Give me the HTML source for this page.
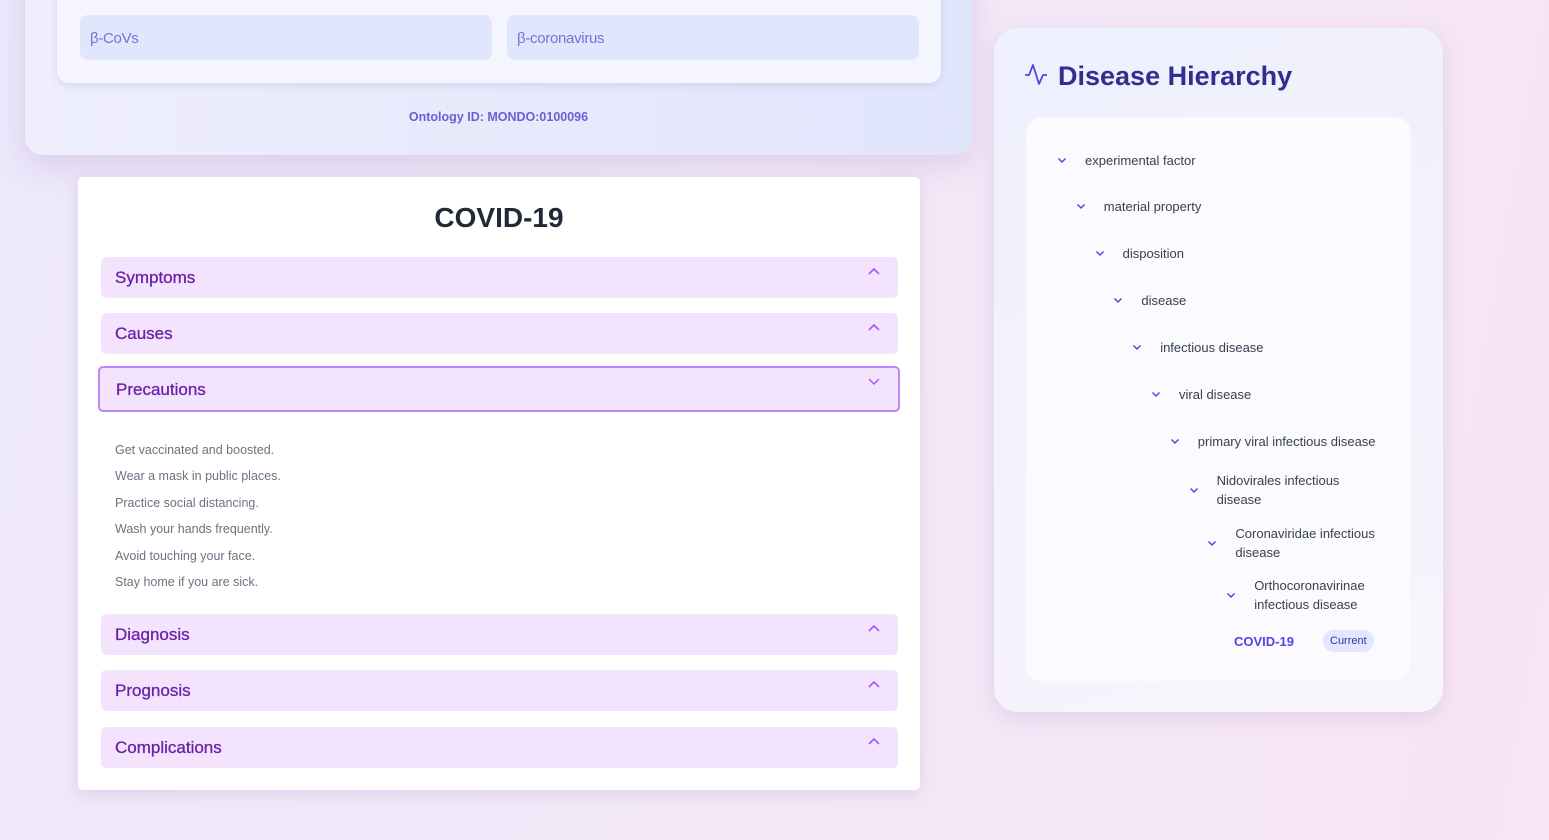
<!DOCTYPE html>
<html><head><meta charset="utf-8"><style>
*{box-sizing:border-box;margin:0;padding:0}
body{width:1549px;height:840px;overflow:hidden;font-family:"Liberation Sans",sans-serif;background:linear-gradient(100deg,#ede8fb 0%,#f2e8f8 50%,#f7e4f4 100%);position:relative}
.top{position:absolute;left:25px;top:-30px;width:947px;height:185px;border-radius:18px;background:linear-gradient(90deg,#eeeefd,#e1e5fc);box-shadow:0 10px 30px rgba(120,90,160,.18)}
.inner{position:absolute;left:32px;top:0;width:884px;height:113px;background:#f4f5fe;border-radius:0 0 12px 12px;box-shadow:0 3px 8px rgba(100,100,150,.15)}
.chip{position:absolute;top:45px;height:45px;width:412px;background:#e0e6fc;border-radius:8px;color:#7a70d8;font-size:15px;padding:15px 10px;letter-spacing:-.3px}
.oid{position:absolute;top:140px;left:0;width:100%;text-align:center;color:#6b5fd3;font-size:12.5px;font-weight:bold}
.main{position:absolute;left:78px;top:177px;width:842px;height:613px;background:#fff;border-radius:5px;box-shadow:0 4px 14px rgba(120,90,160,.15)}
h1{position:absolute;top:25px;width:100%;text-align:center;font-size:28px;color:#1f2937}
.acc{position:absolute;left:23px;width:797px;height:41px;background:#f3e3fd;border-radius:5px;color:#6b21a8;font-size:17px;padding:11px 14px;-webkit-text-stroke:.3px #6b21a8}
.acc svg{position:absolute;right:18px;top:10px}
.open{border:2px solid #c084fc;height:46px;left:20px;width:802px;padding:12px 16px}
.list{position:absolute;left:37px;top:266px;color:#6b7280;font-size:12.5px}
.list div{height:26.4px}
.right{position:absolute;left:994px;top:28px;width:449px;height:684px;border-radius:24px;background:linear-gradient(160deg,#eef0fd,#f8f4fc);box-shadow:0 6px 20px rgba(120,90,160,.15)}
.right h2{position:absolute;left:64px;top:33px;font-size:27px;color:#312e91}
.tree{position:absolute;left:32px;top:89px;width:385px;height:564px;background:#fafaff;border-radius:16px}
.n{position:absolute;font-size:13px;color:#374151;line-height:19px;width:auto}
.n svg{position:absolute;left:-28px;top:50%;margin-top:-5px}
</style></head><body>
<div class="top"><div class="inner"><div class="chip" style="left:23px">β-CoVs</div><div class="chip" style="left:450px">β-coronavirus</div></div><div class="oid">Ontology ID: MONDO:0100096</div></div>
<div class="main"><h1>COVID-19</h1>
<div class="acc" style="top:80px">Symptoms<svg width="12" height="8" viewBox="0 0 12 8"><path d="M1 7L6 2l5 5" stroke="#a855f7" stroke-width="1.6" fill="none"/></svg></div>
<div class="acc" style="top:136px">Causes<svg width="12" height="8" viewBox="0 0 12 8"><path d="M1 7L6 2l5 5" stroke="#a855f7" stroke-width="1.6" fill="none"/></svg></div>
<div class="acc open" style="top:189px">Precautions<svg width="12" height="8" viewBox="0 0 12 8"><path d="M1 1l5 5 5-5" stroke="#a855f7" stroke-width="1.4" fill="none"/></svg></div>
<div class="list"><div>Get vaccinated and boosted.</div><div>Wear a mask in public places.</div><div>Practice social distancing.</div><div>Wash your hands frequently.</div><div>Avoid touching your face.</div><div>Stay home if you are sick.</div></div>
<div class="acc" style="top:437px">Diagnosis<svg width="12" height="8" viewBox="0 0 12 8"><path d="M1 7L6 2l5 5" stroke="#a855f7" stroke-width="1.6" fill="none"/></svg></div>
<div class="acc" style="top:493px">Prognosis<svg width="12" height="8" viewBox="0 0 12 8"><path d="M1 7L6 2l5 5" stroke="#a855f7" stroke-width="1.6" fill="none"/></svg></div>
<div class="acc" style="top:550px">Complications<svg width="12" height="8" viewBox="0 0 12 8"><path d="M1 7L6 2l5 5" stroke="#a855f7" stroke-width="1.6" fill="none"/></svg></div>
</div>
<div class="right">
<svg style="position:absolute;left:30px;top:35px" width="24" height="22" viewBox="0 0 24 22"><path d="M1 12h4l4-10 6 19 4-9h4" stroke="#4f46e5" stroke-width="1.8" fill="none" stroke-linejoin="round"/></svg>
<h2>Disease Hierarchy</h2>
<div class="tree"></div>
</div>
<div id="t"></div>
<script>
const rows=[["experimental factor",160],["material property",206],["disposition",253],["disease",300],["infectious disease",347],["viral disease",394],["primary viral infectious disease",441],["Nidovirales infectious<br>disease",490],["Coronaviridae infectious<br>disease",543],["Orthocoronavirinae<br>infectious disease",595]];
let h="";rows.forEach((r,i)=>{const x=1085+i*18.8;const two=r[0].includes("<br>");h+=`<div class="n" style="left:${x}px;top:${r[1]-(two?19:9.5)}px;width:${1380-x}px"><svg width="10" height="10" viewBox="0 0 10 10"><path d="M1.5 3.5L5 7l3.5-3.5" stroke="#4f46e5" stroke-width="1.5" fill="none"/></svg>${r[0]}</div>`});
h+=`<div class="n" style="left:1234px;top:632px;color:#4f46e5;font-weight:bold">COVID-19</div><div class="n" style="left:1323px;top:630px;background:#e0e7ff;color:#3730a3;font-size:11px;border-radius:11px;padding:1px 7px;line-height:20px">Current</div>`;
document.getElementById("t").innerHTML=h;
</script>
</body></html>
